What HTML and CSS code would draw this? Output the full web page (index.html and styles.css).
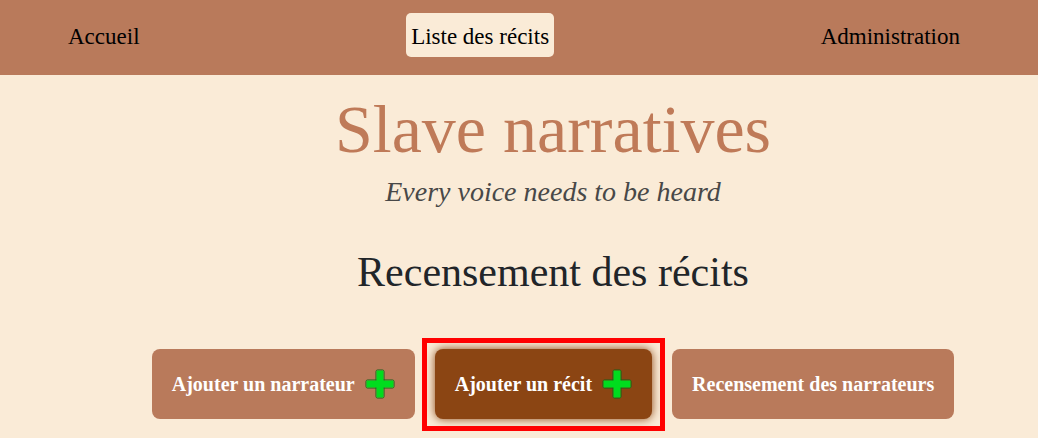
FILE: index.html
```html
<!DOCTYPE html>
<html lang="fr">
<head>
  <meta charset="utf-8">
  <meta name="viewport" content="width=device-width, initial-scale=1">
  <title>Slave narratives</title>
  <link rel="stylesheet" href="styles.css">
</head>
<body>
  <nav class="nav">
    <a class="nav-link" href="#accueil">Accueil</a>
    <a class="nav-link nav-link-active" href="#recits" aria-current="page">Liste des récits</a>
    <a class="nav-link" href="#administration">Administration</a>
  </nav>
  <main class="content">
    <h1 class="title">Slave narratives</h1>
    <p class="tagline">Every voice needs to be heard</p>
    <h2 class="heading">Recensement des récits</h2>
    <div class="actions">
      <button class="action" type="button">
        Ajouter un narrateur
        <svg class="plus" viewBox="0 0 30 30" aria-hidden="true"><rect class="plus-edge" x="11" y="1" width="8" height="28" rx="1.5"/><rect class="plus-edge" x="1" y="11" width="28" height="8" rx="1.5"/><path class="plus-fill" d="M11.5 1.5h7v10h10v7h-10v10h-7v-10h-10v-7h10z"/></svg>
      </button>
      <div class="framed">
        <button class="action action-hover" type="button">
          Ajouter un récit
          <svg class="plus" viewBox="0 0 30 30" aria-hidden="true"><rect class="plus-edge" x="11" y="1" width="8" height="28" rx="1.5"/><rect class="plus-edge" x="1" y="11" width="28" height="8" rx="1.5"/><path class="plus-fill" d="M11.5 1.5h7v10h10v7h-10v10h-7v-10h-10v-7h10z"/></svg>
        </button>
      </div>
      <button class="action" type="button">Recensement des narrateurs</button>
    </div>
  </main>
</body>
</html>
```

FILE: styles.css
```css
* {
  box-sizing: border-box;
}

body {
  margin: 0;
  background: #faebd7;
  color: #212529;
  font-family: "Liberation Serif", "Times New Roman", serif;
}

.nav {
  display: flex;
  justify-content: space-between;
  padding: 13px 73px 18px 63px;
  background: #b97a5b;
}

.nav-link {
  padding: 7px 5px 3px;
  border-radius: 5px;
  color: #000;
  font-size: 23px;
  line-height: 34px;
  text-decoration: none;
}

.nav-link-active {
  background: #faebd7;
}

.content {
  padding: 14px 0 19px 68px;
  text-align: center;
}

.title {
  margin: 0;
  color: #bf7a58;
  font-size: 68px;
  font-weight: 400;
  line-height: 80px;
}

.tagline {
  margin: 2px 0 34px;
  color: #484848;
  font-size: 28px;
  font-style: italic;
  line-height: 42px;
}

.heading {
  margin: 0 0 52px;
  font-size: 42px;
  font-weight: 500;
  line-height: 50px;
}

.actions {
  display: flex;
  justify-content: center;
  gap: 20px;
}

.action {
  display: flex;
  align-items: center;
  gap: 10px;
  height: 70px;
  padding: 0 20px;
  border: 0;
  border-radius: 8px;
  background: #b97a5b;
  color: #fff;
  font: bold 20px/30px "Liberation Serif", "Times New Roman", serif;
  white-space: nowrap;
}

.action-hover {
  background: #8b4513;
  box-shadow: 0 0 10px #8b4513;
}

.framed {
  position: relative;
}

.framed::after {
  content: "";
  position: absolute;
  inset: -11px -13px -12px;
  border: 5px solid #f00;
  pointer-events: none;
}

.plus {
  width: 30px;
  height: 30px;
}

.plus-edge {
  fill: none;
  stroke: #17601b;
  stroke-width: 1;
}

.plus-fill {
  fill: #00dc1e;
}
```
